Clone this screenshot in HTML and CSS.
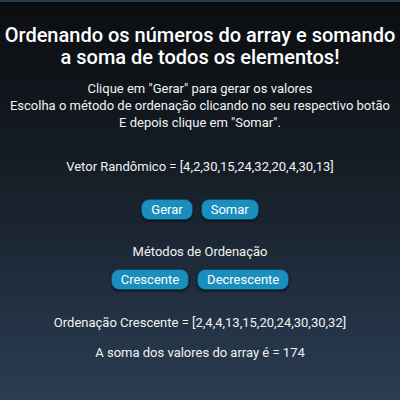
FILE: index.html
```html
<!DOCTYPE html>
<html lang="pt-BR">
<head>
<meta charset="utf-8">
<link rel="stylesheet" href="styles.css">
</head>
<body>
<div class="topline"></div>
<main class="page">
  <h1 class="title">Ordenando os números do array e somando a soma de todos os elementos!</h1>
  <p class="intro">Clique em "Gerar" para gerar os valores<br>Escolha o método de ordenação clicando no seu respectivo botão<br>E depois clique em "Somar".</p>
  <p class="vetor">Vetor Randômico = [4,2,30,15,24,32,20,4,30,13]</p>
  <div class="actions">
    <button class="btn">Gerar</button>
    <button class="btn">Somar</button>
  </div>
  <p class="metodos">Métodos de Ordenação</p>
  <div class="actions">
    <button class="btn">Crescente</button>
    <button class="btn">Decrescente</button>
  </div>
  <p class="resultado">Ordenação Crescente = [2,4,4,13,15,20,24,30,30,32]</p>
  <p class="soma">A soma dos valores do array é = 174</p>
</main>
</body>
</html>
```
FILE: styles.css
```css
html, body {
  margin: 0;
  padding: 0;
  height: 100%;
}
body {
  background: linear-gradient(to bottom, #0b0d10 0%, #151c25 40%, #2a3d53 100%);
  color: #f2f2f2;
  font-family: Roboto, "Noto Sans", sans-serif;
  overflow: hidden;
}
.topline {
  height: 2px;
  background: #2a3d50;
}
.page {
  display: flex;
  flex-direction: column;
  align-items: center;
  text-align: center;
}
.title {
  margin: 22px 0 0;
  font-size: 20px;
  font-weight: 500;
  line-height: 22px;
  color: #ffffff;
  padding: 0;
}
.intro {
  margin: 12px 0 0;
  font-size: 13px;
  line-height: 17px;
}
.vetor {
  margin: 27px 0 0;
  font-size: 13px;
  line-height: 17px;
}
.actions {
  display: flex;
  gap: 8px;
  margin-top: 24px;
}
.btn {
  font-family: Roboto, "Noto Sans", sans-serif;
  font-size: 13px;
  line-height: 15px;
  color: #ffffff;
  background: #1a8ebd;
  border: 1px solid #0d4a66;
  border-radius: 8px;
  padding: 2px 9px;
  box-shadow: 0 1px 2px rgba(0,0,0,0.8);
}
.metodos {
  margin: 23px 0 0;
  font-size: 13px;
  line-height: 17px;
}
.metodos + .actions {
  margin-top: 9px;
}
.resultado {
  margin: 24px 0 0;
  font-size: 13px;
  line-height: 17px;
}
.soma {
  margin: 13px 0 0;
  font-size: 13px;
  line-height: 17px;
}
```
